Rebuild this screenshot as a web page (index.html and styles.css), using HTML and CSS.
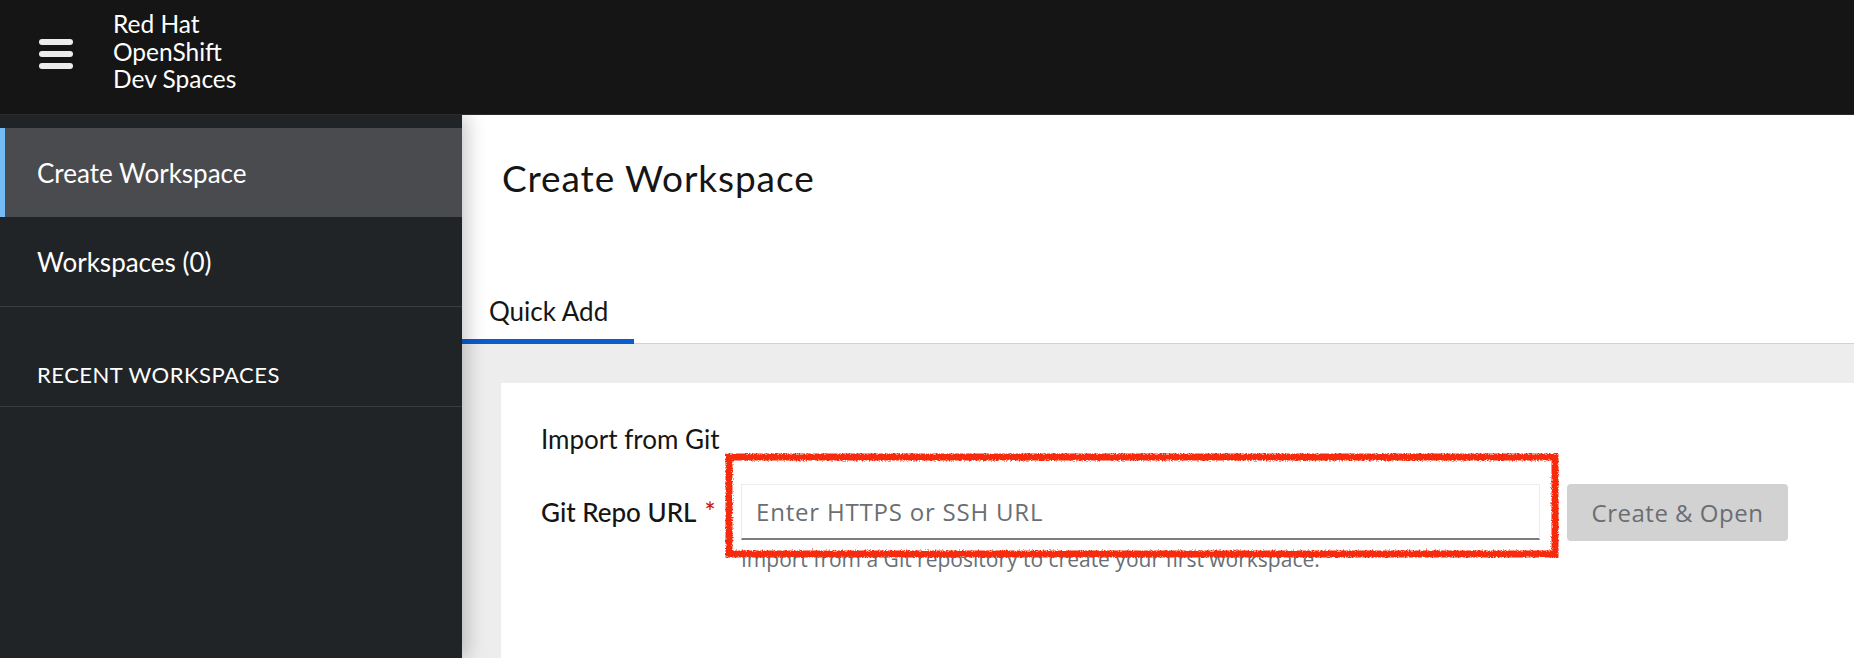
FILE: index.html
```html
<!DOCTYPE html>
<html lang="en">
<head>
<meta charset="utf-8">
<title>Create Workspace</title>
<link rel="stylesheet" href="styles.css">
</head>
<body>
<header class="masthead">
  <button class="hamburger" aria-label="Global navigation">
    <svg width="34" height="30" viewBox="0 0 34 30"><rect x="0" y="0" width="34" height="6" rx="3"/><rect x="0" y="12" width="34" height="6" rx="3"/><rect x="0" y="24" width="34" height="6" rx="3"/></svg>
  </button>
  <div class="brand">Red Hat<br>OpenShift<br>Dev Spaces</div>
</header>
<div class="layout">
  <nav class="sidebar">
    <a class="nav-item active">Create Workspace</a>
    <a class="nav-item">Workspaces (0)</a>
    <div class="nav-section">RECENT WORKSPACES</div>
  </nav>
  <main class="main">
    <section class="page-head">
      <h1 class="title">Create Workspace</h1>
      <div class="tabs"><div class="tab active">Quick Add</div></div>
    </section>
    <section class="content">
      <div class="card">
        <div class="card-title">Import from Git</div>
        <div class="form-row">
          <label class="label">Git Repo URL <span class="req">*</span></label>
          <div class="field">
            <div class="controls">
              <input class="input" type="text" placeholder="Enter HTTPS or SSH URL">
              <button class="btn" disabled>Create &amp; Open</button>
            </div>
            <div class="helper">Import from a Git repository to create your first workspace.</div>
          </div>
          <svg class="annotation" width="834" height="105" viewBox="0 0 834 105">
            <defs>
              <filter id="rough" x="-5%" y="-20%" width="110%" height="140%">
                <feTurbulence type="fractalNoise" baseFrequency="0.7" numOctaves="2" seed="3" result="n"/>
                <feDisplacementMap in="SourceGraphic" in2="n" scale="4" xChannelSelector="R" yChannelSelector="G"/>
              </filter>
            </defs>
            <rect x="4" y="4" width="826" height="97" fill="none" stroke="#f72a0c" stroke-width="7" filter="url(#rough)"/>
          </svg>
        </div>
      </div>
    </section>
  </main>
</div>
</body>
</html>
```
FILE: styles.css
```css
* { box-sizing: border-box; }
html, body {
  margin: 0;
  padding: 0;
  width: 1854px;
  height: 658px;
  overflow: hidden;
  font-family: "Lato", "Noto Sans", sans-serif;
  color: #151515;
}
.masthead {
  height: 115px;
  background: #151515;
  display: flex;
  align-items: flex-start;
  border-bottom: 1px solid #2b2b2b;
}
.hamburger {
  margin: 39px 0 0 39px;
  padding: 0;
  border: 0;
  background: none;
  width: 34px;
  height: 30px;
  display: block;
}
.hamburger svg { display: block; fill: #ececec; }
.brand {
  margin: 10px 0 0 40px;
  font-size: 24.5px;
  line-height: 27.5px;
  color: #ffffff;
}
.layout {
  display: flex;
  height: 543px;
  overflow: hidden;
}
.sidebar {
  width: 462px;
  flex: none;
  background: #212427;
  padding-top: 13px;
  position: relative;
  z-index: 2;
  box-shadow: 5px 0 18px rgba(0, 0, 0, 0.22);
}
.nav-item {
  display: flex;
  align-items: center;
  height: 90px;
  padding-left: 37px;
  font-size: 26px;
  color: #ffffff;
}
.nav-item.active {
  height: 89px;
  background: #4a4b4f;
  border-left: 5px solid #73bcf7;
  padding-left: 32px;
}
.nav-item:not(.active) { border-bottom: 1px solid #3a3d40; }
.nav-section {
  padding: 56px 0 19px 37px;
  font-size: 22px;
  line-height: 24px;
  letter-spacing: 0.5px;
  color: #ffffff;
  border-bottom: 1px solid #3a3d40;
}
.main {
  flex: 1;
  background: #ededed;
  min-width: 0;
}
.page-head {
  background: #ffffff;
  padding-top: 39px;
}
.title {
  margin: 0 0 0 40px;
  font-size: 37px;
  line-height: 47px;
  font-weight: 400;
  letter-spacing: 0.9px;
}
.tabs {
  margin-top: 81px;
  display: flex;
  border-bottom: 1px solid #d2d2d2;
}
.tab {
  position: relative;
  height: 61px;
  display: flex;
  align-items: center;
  padding: 0 26px 4px 27px;
  font-size: 26px;
}
.tab.active::after {
  content: "";
  position: absolute;
  left: 0;
  right: 0;
  bottom: -1px;
  height: 5px;
  background: #0b5ccf;
}
.content {
  padding: 39px 0 0 39px;
}
.card {
  background: #ffffff;
  padding: 40px 0 120px 40px;
}
.card-title {
  font-size: 26px;
  line-height: 32px;
}
.form-row {
  position: relative;
  margin-top: 29px;
  display: grid;
  grid-template-columns: 200px 1fr;
}
.label {
  height: 56px;
  display: flex;
  align-items: center;
  font-size: 26px;
  font-weight: 500;
}
.req { color: #c9190b; margin-left: 8px; }
.controls {
  display: flex;
  align-items: flex-start;
  gap: 27px;
}
.input {
  width: 799px;
  height: 56px;
  border: 1px solid #ececec;
  border-bottom: 2px solid #7a7d81;
  padding: 0 14px;
  font-family: "Open Sans", sans-serif;
  font-size: 24px;
  letter-spacing: 0.8px;
  color: #151515;
  background: #fff;
  outline: none;
}
.input::placeholder { color: #6a6e73; }
.btn {
  width: 221px;
  height: 57px;
  border: 0;
  border-radius: 4px;
  background: #d2d2d2;
  color: #6a6e73;
  font-family: "Open Sans", sans-serif;
  font-size: 24px;
  letter-spacing: 0.5px;
  padding: 0;
}
.helper {
  margin-top: 6px;
  font-family: "Open Sans", sans-serif;
  font-size: 21px;
  line-height: 24px;
  color: #6a6e73;
}
.annotation {
  position: absolute;
  left: 184px;
  top: -31px;
  pointer-events: none;
}
```
